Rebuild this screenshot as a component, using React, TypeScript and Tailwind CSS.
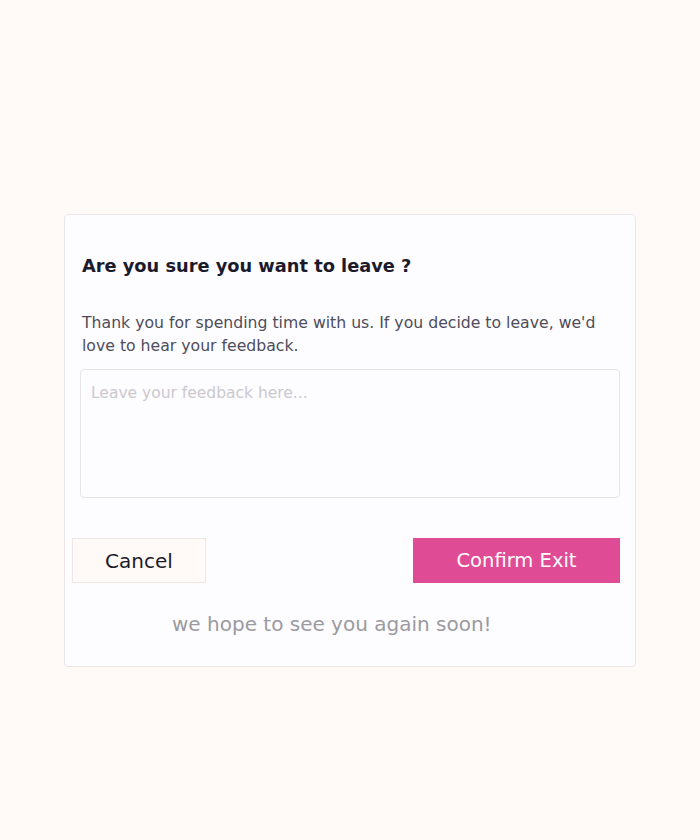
export default function App() {
  return (
    <div
      className="min-h-[840px] w-full bg-[#fffaf8] pt-[214px]"
      style={{ fontFamily: "'DejaVu Sans', sans-serif" }}
    >
      <div className="mx-auto w-[572px] rounded-[4px] border border-[#ebe7e7] bg-[#fdfcff] px-[17px] pb-[26px] pt-[38px]">
        <h2 className="text-[17.8px] font-bold leading-[26px] text-[#1b1a2b]">
          Are you sure you want to leave ?
        </h2>
        <p className="mt-[32px] text-[15.7px] leading-[23px] text-[#4e4d5a]">
          Thank you for spending time with us. If you decide to leave, we'd love to hear your feedback.
        </p>
        <textarea
          placeholder="Leave your feedback here..."
          className="mt-[12px] -mx-[2px] block h-[129px] w-[540px] resize-none rounded-[4px] border border-[#e6e4e6] bg-[#fdfcff] px-[10px] pb-[10px] pt-[12px] text-[15.5px] leading-[23px] text-[#4e4d5a] outline-none placeholder:text-[#cbc9cd]"
        />
        <div className="mt-[40px] -ml-[10px] flex items-center justify-between">
          <button className="h-[45px] w-[134px] border border-[#f2e6e2] bg-[#fffaf8] text-[20px] text-[#1b1a2b]">
            Cancel
          </button>
          <button className="-mr-[2px] h-[45px] w-[207px] bg-[#e04b96] text-[19.5px] text-white">
            Confirm Exit
          </button>
        </div>
        <p className="mt-[25px] pl-[90px] text-[20px] leading-[32px] text-[#9b9a9f]">
          we hope to see you again soon!
        </p>
      </div>
    </div>
  );
}
